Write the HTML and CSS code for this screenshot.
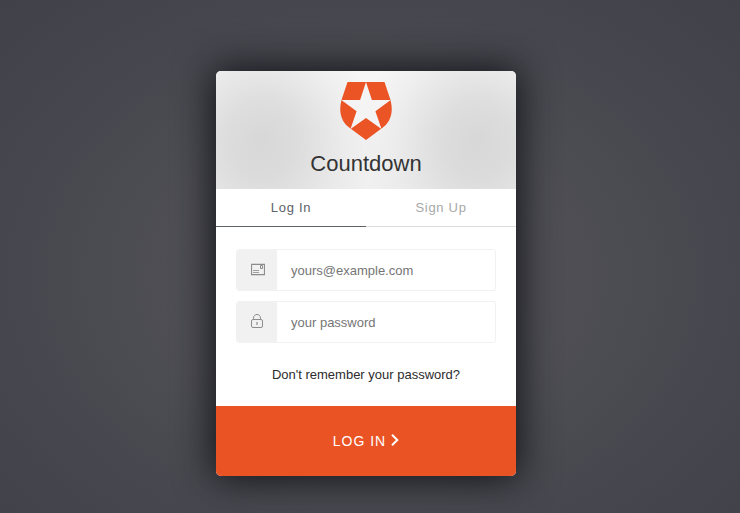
FILE: index.html
```
<!DOCTYPE html>
<html lang="en">
<head>
<meta charset="utf-8">
<title>Countdown</title>
<link rel="stylesheet" href="styles.css">
</head>
<body>
<main class="card">
  <header class="header">
    <div class="glow"></div>
    <svg class="logo" width="52" height="58" viewBox="0 0 52 58" aria-hidden="true">
      <path fill="#eb5424" d="M7.500 0H44.500L50.500 18C54 31 50 41 41.500 46.500L26 58L10.500 46.500C2 41-2 31 1.500 18Z"/>
      <path fill="#f4f4f4" d="M26 0L31.900 18H50.700L35.400 29.200L41.500 47L26 36L10.500 47L16.600 29.200L1.300 18H20.100Z"/>
    </svg>
    <h1 class="title">Countdown</h1>
  </header>
  <nav class="tabs">
    <a class="tab tab-active">Log In</a>
    <a class="tab">Sign Up</a>
  </nav>
  <form class="form">
    <label class="field">
      <span class="icon-box">
        <svg width="14" height="13" viewBox="0 0 14 13" fill="none" stroke="#8c8c8c"><path d="M.5 1.300H13.500V11.700H.5Z" stroke-width="1.200"/><path d="M2 7.500H8M2 9.500H8" stroke="#a0a0a0"/><path d="M9.500 2.500H11.500V5.500H9.500Z"/></svg>
      </span>
      <input class="input" type="email" placeholder="yours@example.com">
    </label>
    <label class="field">
      <span class="icon-box">
        <svg class="lock" width="12" height="14" viewBox="0 0 12 14" fill="none" stroke="#8c8c8c"><rect x=".5" y="5.500" width="11" height="8" rx="1.500"/><path d="M2.500 5.500V4.200C2.500-.8 9.500-.8 9.500 4.200V5.500"/><path d="M6 8V11" stroke-width="1.500" stroke="#a0a0a0"/></svg>
      </span>
      <input class="input" type="password" placeholder="your password">
    </label>
    <a class="forgot">Don't remember your password?</a>
  </form>
  <button class="submit" type="button"><span>Log In</span><svg width="8" height="12" viewBox="0 0 8 12" fill="none" stroke="#fff" stroke-width="2"><path d="M1 .8L6.300 6L1 11.200"/></svg></button>
</main>
</body>
</html>
```
FILE: styles.css
```
* { box-sizing: border-box; }
body {
  margin: 0;
  height: 513px;
  padding: 71px 8px 0 0;
  display: flex;
  justify-content: center;
  align-items: flex-start;
  overflow: hidden;
  font-family: "Liberation Sans", Arial, sans-serif;
  background: radial-gradient(ellipse farthest-corner at 50% 54%, #535357 0%, #4e4e54 40%, #46464e 71%, #414149 100%);
}
.card {
  width: 300px;
  height: 405px;
  border-radius: 5px;
  background: #fff;
  box-shadow: 0 0 38px 3px #111118;
  overflow: hidden;
  display: flex;
  flex-direction: column;
}
.header {
  position: relative;
  height: 118px;
  padding-top: 11px;
  display: flex;
  flex-direction: column;
  align-items: center;
  overflow: hidden;
  background: linear-gradient(#f6f6f6, #f0f0f0);
}
.glow {
  position: absolute;
  inset: 0;
  background:
    radial-gradient(ellipse 115px 125px at 46px 67px, rgba(60, 60, 60, .15), rgba(60, 60, 60, .12) 30%, rgba(60, 60, 60, .03) 75%, transparent),
    radial-gradient(ellipse 115px 125px at 262px 67px, rgba(60, 60, 60, .15), rgba(60, 60, 60, .12) 30%, rgba(60, 60, 60, .03) 75%, transparent);
}
.logo, .title { position: relative; }
.logo { display: block; }
.title {
  margin: 11px 0 0;
  font-size: 22px;
  line-height: 25px;
  font-weight: 400;
  color: #333;
}
.tabs { display: flex; height: 38px; }
.tab {
  flex: 1;
  text-align: center;
  font-size: 13px;
  line-height: 37px;
  letter-spacing: .7px;
  color: #a8a8a8;
  border-bottom: 1px solid #dcdcdc;
}
.tab-active { color: #5c6266; border-color: #5c6266; }
.form {
  flex: 1;
  padding: 22px 20px 0;
  display: flex;
  flex-direction: column;
  gap: 10px;
}
.field {
  display: flex;
  height: 42px;
  border: 1px solid #f1f1f1;
  border-radius: 3px;
  overflow: hidden;
}
.icon-box {
  width: 40px;
  padding: 13px 0 0 14px;
  background: #f1f1f1;
}
.icon-box svg { display: block; }
.icon-box .lock { margin-top: -1px; }
.input {
  flex: 1;
  min-width: 0;
  border: 0;
  outline: 0;
  padding: 0 14px;
  font: 13px "Liberation Sans", Arial, sans-serif;
  background: transparent;
}
.input::placeholder { color: #757575; }
.forgot {
  margin-top: 14px;
  text-align: center;
  font-size: 13px;
  line-height: 15px;
  color: #2c2c2c;
}
.submit {
  height: 70px;
  border: 0;
  padding: 0;
  display: flex;
  align-items: center;
  justify-content: center;
  gap: 5px;
  background: #ea5323;
  color: #fff;
  font: 14px "Liberation Sans", Arial, sans-serif;
  letter-spacing: 1px;
  text-transform: uppercase;
}
.submit svg { margin-top: -2px; }
```
